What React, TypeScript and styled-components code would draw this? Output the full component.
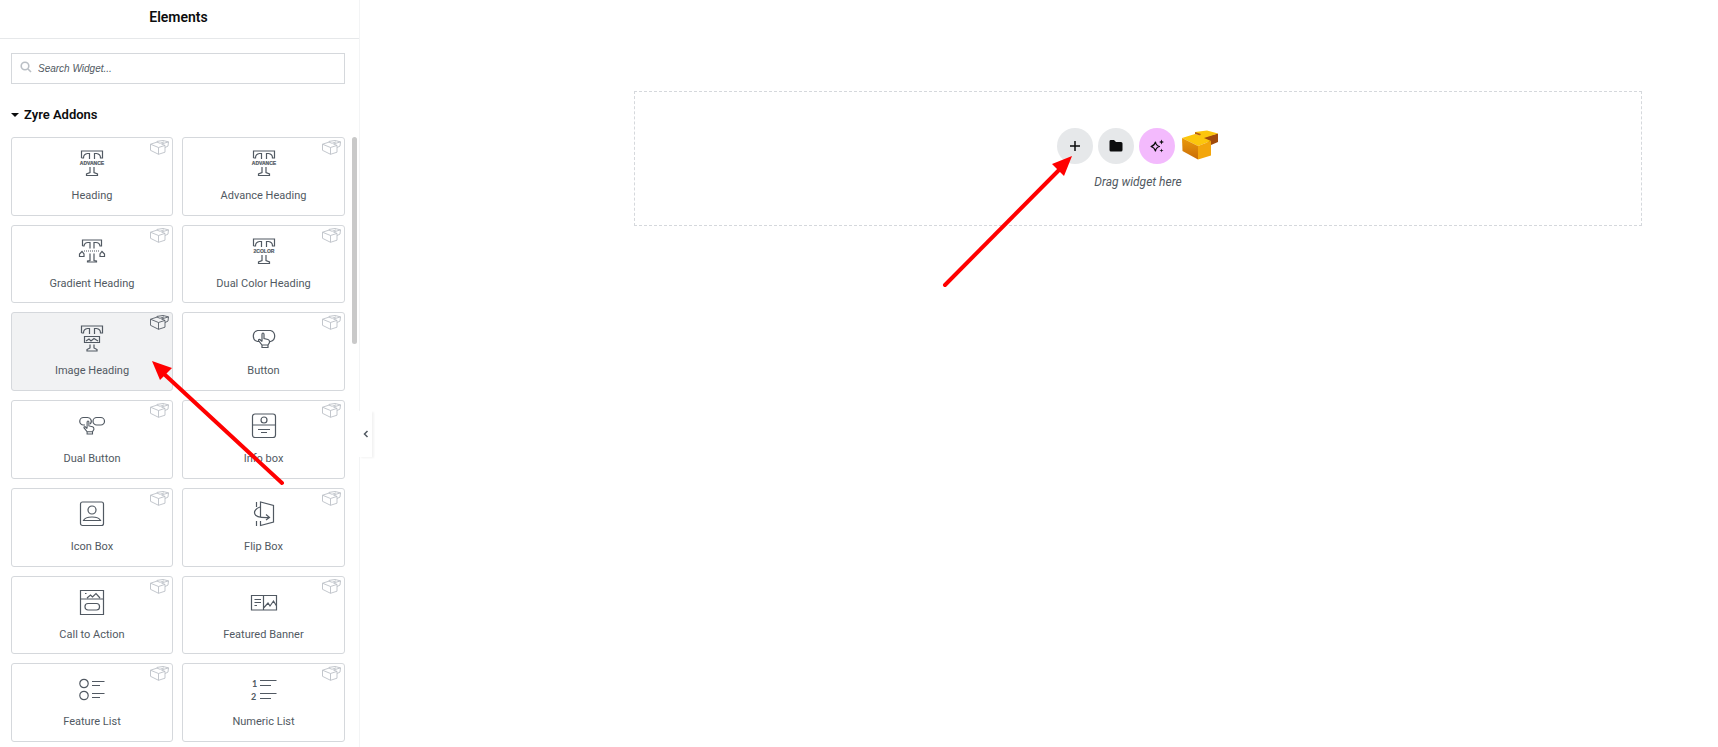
import React from "react";
import styled, { createGlobalStyle } from "styled-components";

const GlobalStyle = createGlobalStyle`
  *, *::before, *::after { box-sizing: border-box; }
  body { margin: 0; background: #fff; font-family: Roboto, "Liberation Sans", sans-serif; }
  button, input { font-family: inherit; }
  h1, h2, p, ul { margin: 0; padding: 0; }
`;

const Editor = styled.div`
  display: flex;
  min-height: 100vh;
  overflow: hidden;
`;

const Sidebar = styled.aside`
  position: relative;
  display: flex;
  flex-direction: column;
  flex: 0 0 360px;
  border-right: 1px solid #f3f4f5;
  background: #fff;
`;

const PanelHeader = styled.header`
  display: flex;
  align-items: center;
  justify-content: center;
  height: 39px;
  padding: 0 2px 4px 0;
  border-bottom: 1px solid #e6e8ea;
`;

const PanelTitle = styled.h1`
  color: #0c0d0e;
  font-size: 14px;
  line-height: 16px;
  font-weight: 600;
`;

const SearchBox = styled.label`
  display: flex;
  gap: 6px;
  height: 31px;
  margin: 14px 14px 0 11px;
  padding: 7px 8px;
  border: 1px solid #d5d8dc;
  color: #babfc5;
`;

const SearchInput = styled.input`
  flex: 1;
  min-width: 0;
  padding: 0;
  border: 0;
  outline: 0;
  background: none;
  color: #515962;
  font-family: "Liberation Sans", sans-serif;
  font-size: 10px;
  line-height: 16px;
  font-style: italic;
  &::placeholder { color: #515962; opacity: 1; }
`;

const CategoryButton = styled.button`
  display: flex;
  align-items: center;
  gap: 5px;
  margin: 21px 0 12px 11px;
  padding: 0;
  border: 0;
  background: none;
  color: #0c0d0e;
  font-size: 13px;
  line-height: 20px;
  font-weight: 600;
`;

const Category = styled.div`
  display: flex;
  flex: 1;
  justify-content: space-between;
  padding: 0 2px 5px 11px;
`;

const WidgetGrid = styled.ul`
  display: grid;
  flex: 0 0 334px;
  grid-template-columns: 162px 1fr;
  grid-auto-rows: 1fr;
  gap: 9px;
  list-style: none;
`;

const WidgetItem = styled.li`
  display: flex;
`;

const WidgetCard = styled.button<{ $active?: boolean }>`
  position: relative;
  display: flex;
  flex: 1;
  flex-direction: column;
  align-items: center;
  gap: 11px;
  padding: 11px 0 9px;
  border: 1px solid #d5d8dc;
  border-radius: 3px;
  background: ${(p) => (p.$active ? "#f1f2f3" : "#fff")};
  color: #515962;
  font-size: 11px;
  line-height: 16px;
`;

const Brand = styled.span<{ $active?: boolean }>`
  position: absolute;
  top: 2px;
  right: 3px;
  display: flex;
  color: ${(p) => (p.$active ? "#515962" : "#babfc5")};
`;

const ScrollThumb = styled.div`
  width: 5px;
  height: 207px;
  border-radius: 3px;
  background: #c9c9c9;
`;

const CollapseButton = styled.button`
  position: absolute;
  top: 411px;
  left: 359px;
  z-index: 1;
  display: flex;
  align-items: center;
  justify-content: center;
  width: 13px;
  height: 46px;
  padding: 0;
  border: 0;
  background: #fff;
  box-shadow: 2px 1px 2px rgba(0, 0, 0, 0.05);
  color: #515962;
`;

const Canvas = styled.main`
  flex: 1;
  min-width: 0;
  padding: 91px 76px 0 274px;
`;

const DropZone = styled.section`
  display: flex;
  flex-direction: column;
  align-items: center;
  gap: 10px;
  padding: 36px 0 35px;
  border: 1px dashed #d5d8dc;
`;

const ActionBar = styled.div`
  position: relative;
  display: flex;
  gap: 5px;
`;

const ActionButton = styled.button<{ $tone?: string; $wide?: boolean }>`
  display: flex;
  align-items: center;
  justify-content: center;
  width: ${(p) => (p.$wide ? 40 : 36)}px;
  height: 36px;
  padding: 0;
  border: 0;
  border-radius: 50%;
  background: ${(p) => p.$tone ?? "#e6e8ea"};
  color: #0c0d0e;
`;

const DropHint = styled.p`
  color: #515962;
  font-size: 12px;
  line-height: 16px;
  font-style: italic;
`;

const Pointer = styled.svg<{ $top: number; $left: number }>`
  position: absolute;
  z-index: 2;
  top: ${(p) => p.$top}px;
  left: ${(p) => p.$left}px;
  pointer-events: none;
`;

const tTop = "M3.5 9V2H24.5V9H22.500Q22.500 5 18.500 4.500H16.500V10M11.500 10V4.500H9.500Q5.500 5 5.500 9H3.500";
const tBase = "M12 18V23.500L8.500 25V26.500H19.500V25L16 23.500V18";
const hand = "M4 9V2Q4 0.500 5 0.500T6 2V6L10 7Q11.500 7.500 11.500 9V10L10 12.500H4L0.500 8Q0.500 6.500 2 7L4 9M4 12.500V15H10V12.500";

const IconText = ({ y, children }: { y: number; children: string }) => (
  <text x="14" y={y} textAnchor="middle" fontFamily="Liberation Sans, sans-serif" fontSize="5" fontWeight="700" fill="currentColor" stroke="currentColor" strokeWidth=".2">
    {children}
  </text>
);

const icons: Record<string, React.ReactNode> = {
  heading: (<><path d={tTop} /><IconText y={16}>ADVANCE</IconText><path d={tBase} /></>),
  gradient: (
    <>
      <path d="M4.500 9V3H23.500V9H22Q21.500 5.500 18 5.500H16V11.500M12 11.500V5.500H10Q6.500 5.500 6 9H4.500" />
      <path d="M6 14H22" strokeDasharray="1 1" />
      <path d="M12 16.500V23.500L9.500 24V25H18.500V24L16 23.500V16.500" />
      <path d="M1.500 19.500V17L4 14.500L6 17V19.500ZM22 19.500V17L24 14.500L26.500 17V19.500Z" />
    </>
  ),
  dual: (<><path d={tTop} /><IconText y={16}>2COLOR</IconText><path d={tBase} /></>),
  image: (
    <>
      <path d={tTop} />
      <path d="M6.500 12.500H21.500V18.500H6.500ZM8 17L11 15L13 17L16 14.500L20 17" />
      <path d="M12 20.500V24L9 25.500V27H19V25.500L16 24V20.500" />
    </>
  ),
  button: (
    <>
      <path d="M9 17.500H7.500A5.700 5.700 0 0 1 7.500 6.500H20.500A5.700 5.700 0 0 1 20.500 17.500H19.500" />
      <path d={hand} transform="translate(8 8.500)" />
    </>
  ),
  dualButton: (
    <>
      <path d="M7 13H5.500A3.700 3.700 0 0 1 5.500 5.500H9.500A3.700 3.700 0 0 1 12 12" />
      <rect x="15" y="5.500" width="11.500" height="7.500" rx="3.750" />
      <path d={hand} transform="translate(5.500 8.500) scale(.9)" />
    </>
  ),
  info: (
    <>
      <rect x="2.500" y="2" width="23" height="23.500" rx="2.500" />
      <circle cx="14" cy="8" r="3" />
      <path d="M2.500 13H25.500M8 17.500H20M11 20.500H17" />
    </>
  ),
  iconBox: (
    <>
      <rect x="2.500" y="2" width="23" height="23.500" rx="2" />
      <circle cx="14" cy="10" r="4" />
      <path d="M5.500 20.500Q7 17 14 17T22.500 20.500Z" />
    </>
  ),
  flip: (
    <>
      <path d="M6.500 2V7M6.500 21V26M10.500 17V2L23.500 5.500V22L10.500 25.500V21" />
      <path d="M10 7Q4.500 9 4.500 13Q5 18 19 17.500M16 14.500L19.500 17.500L16 20" />
    </>
  ),
  cta: (
    <>
      <path d="M2.500 2.500H25.500V26.500H2.500ZM2.500 11H25.500M7 5.500H8.500M9 10L12.500 7L14.500 9L18 5.500L22 10" />
      <rect x="7" y="15.500" width="14.500" height="6.500" rx="3" />
    </>
  ),
  banner: (
    <path d="M1.500 7.500H26.500V22H1.500ZM13.500 7.500V22M4.500 11.500H11M4.500 14.500H11M4.500 17.500H7M14 19.500L18 15L20 18L23.500 13L26.500 18" />
  ),
  features: (
    <>
      <circle cx="6" cy="8.500" r="4.200" />
      <circle cx="6" cy="20.500" r="4.200" />
      <path d="M14 6.500H26.500M14 10.500H22M14 18.500H26.500M14 22.500H22" />
    </>
  ),
  numeric: (
    <>
      <text x="2" y="12" fontFamily="Lato, sans-serif" fontSize="9" fontWeight="700" fill="currentColor" stroke="none">1</text>
      <text x="1" y="25" fontFamily="Lato, sans-serif" fontSize="9" fontWeight="700" fill="currentColor" stroke="none">2</text>
      <path d="M10 5.500H26.500M10 10.500H21M10 18.500H26.500M10 23.500H21" />
    </>
  ),
};

const WidgetIcon = ({ name }: { name: string }) => (
  <svg width="28" height="28" viewBox="0 0 28 28" fill="none" stroke="currentColor" strokeWidth="1.2" aria-hidden="true">
    {icons[name]}
  </svg>
);

const BrandIcon = () => (
  <svg width="19" height="15" viewBox="0 1 38 32" preserveAspectRatio="none" fill="none" stroke="currentColor" strokeWidth="1.8" strokeLinejoin="round" aria-hidden="true">
    <path d="M1 10L14 5.500L20 8L28 5M14 5.500V4L26 2L37 5L23 9.500L30 12.500L17 17L1 10V23L17 31.500L30 27V12.500M37 5L36 14L30 17M17 17V31.500" />
  </svg>
);

const Logo = () => (
  <svg width="38" height="36" viewBox="0 0 38 36" aria-hidden="true">
    <defs>
      <linearGradient id="brickSide" x1="0" y1="0" x2="0" y2="1">
        <stop offset="0" stopColor="#eb9a0b" />
        <stop offset="1" stopColor="#c96c08" />
      </linearGradient>
    </defs>
    <path d="M37 5.500L23 9L22 11L30 17L37 14Z" fill="#a04a0c" />
    <path d="M1 10L14 6L19 7.500L14 4L26 2.500L37 5.500L23 10L30 13L17 18Z" fill="#fcc60c" />
    <path d="M14 4V6L19 7.500L20 6Z" fill="#b9610c" />
    <path d="M1 10L17 18V31.500L1.500 23Z" fill="url(#brickSide)" />
    <path d="M17 18L30 13V27.500L17 31.500Z" fill="#f3a60c" />
  </svg>
);

const widgets = [
  ["Heading", "heading"],
  ["Advance Heading", "heading"],
  ["Gradient Heading", "gradient"],
  ["Dual Color Heading", "dual"],
  ["Image Heading", "image"],
  ["Button", "button"],
  ["Dual Button", "dualButton"],
  ["Info box", "info"],
  ["Icon Box", "iconBox"],
  ["Flip Box", "flip"],
  ["Call to Action", "cta"],
  ["Featured Banner", "banner"],
  ["Feature List", "features"],
  ["Numeric List", "numeric"],
];

export default function App() {
  return (
    <>
      <GlobalStyle />
      <Editor>
        <Sidebar>
          <PanelHeader>
            <PanelTitle>Elements</PanelTitle>
          </PanelHeader>
          <SearchBox>
            <svg width="12" height="12" viewBox="0 0 12 12" fill="none" stroke="currentColor" strokeWidth="1.600" aria-hidden="true">
              <circle cx="5" cy="5" r="3.800" />
              <path d="M8 8L11 11" />
            </svg>
            <SearchInput type="text" aria-label="Search Widget" placeholder="Search Widget..." />
          </SearchBox>
          <CategoryButton type="button" aria-expanded="true">
            <svg width="8" height="4" viewBox="0 0 8 4" fill="currentColor" aria-hidden="true">
              <path d="M0 0H8L4 4Z" />
            </svg>
            Zyre Addons
          </CategoryButton>
          <Category>
            <WidgetGrid>
              {widgets.map(([label, icon]) => {
                const active = label === "Image Heading";
                return (
                  <WidgetItem key={label}>
                    <WidgetCard type="button" $active={active}>
                      <WidgetIcon name={icon} />
                      {label}
                      <Brand $active={active}><BrandIcon /></Brand>
                    </WidgetCard>
                  </WidgetItem>
                );
              })}
            </WidgetGrid>
            <ScrollThumb />
          </Category>
          <CollapseButton type="button" aria-label="Collapse panel">
            <svg width="6" height="8" viewBox="0 0 6 8" fill="none" stroke="currentColor" strokeWidth="1.500" aria-hidden="true">
              <path d="M4.500 1L1.500 4L4.500 7" />
            </svg>
          </CollapseButton>
          <Pointer $top={355} $left={146} width="144" height="136" aria-hidden="true">
            <path d="M136 128L17 18" stroke="#f00" strokeWidth="4" strokeLinecap="round" />
            <path d="M6 6L26 13L14 25Z" fill="#f00" />
          </Pointer>
        </Sidebar>
        <Canvas>
          <DropZone>
            <ActionBar>
              <ActionButton type="button" aria-label="Add new container">
                <svg width="12" height="12" viewBox="0 0 12 12" stroke="currentColor" strokeWidth="1.500" aria-hidden="true">
                  <path d="M6 1V11M1 6H11" />
                </svg>
              </ActionButton>
              <ActionButton type="button" aria-label="Add template">
                <svg width="14" height="12" viewBox="0 0 14 12" fill="currentColor" aria-hidden="true">
                  <path d="M1.500 0H5L7 2H12Q13.500 2 13.500 3.500V10Q13.500 11.500 12 11.500H2Q.500 11.500 .500 10V1.500Q.500 0 1.500 0Z" />
                </svg>
              </ActionButton>
              <ActionButton type="button" $tone="#f3bafd" aria-label="Build with AI">
                <svg width="14" height="14" viewBox="0 0 14 14" fill="none" stroke="currentColor" strokeWidth="1.200" strokeLinejoin="round" aria-hidden="true">
                  <path d="M5.500 3Q6 6.500 9.500 7.500Q6 8.500 5.500 12Q4.500 8.500 1 7.500Q4.500 6.500 5.500 3Z" />
                  <path d="M11.500 .500L12.200 2.300L14 3L12.200 3.700L11.500 5.500L10.800 3.700L9 3L10.800 2.300ZM11.500 9.500L12 11L13.500 11.500L12 12L11.500 13.500L11 12L9.500 11.500L11 11Z" fill="currentColor" stroke="none" />
                </svg>
              </ActionButton>
              <ActionButton type="button" $tone="transparent" $wide aria-label="Zyre Addons library">
                <Logo />
              </ActionButton>
              <Pointer $top={22} $left={-118} width="140" height="144" aria-hidden="true">
                <path d="M6 135L122 18" stroke="#f00" strokeWidth="4" strokeLinecap="round" />
                <path d="M133 6L113 14L125 26Z" fill="#f00" />
              </Pointer>
            </ActionBar>
            <DropHint>Drag widget here</DropHint>
          </DropZone>
        </Canvas>
      </Editor>
    </>
  );
}
